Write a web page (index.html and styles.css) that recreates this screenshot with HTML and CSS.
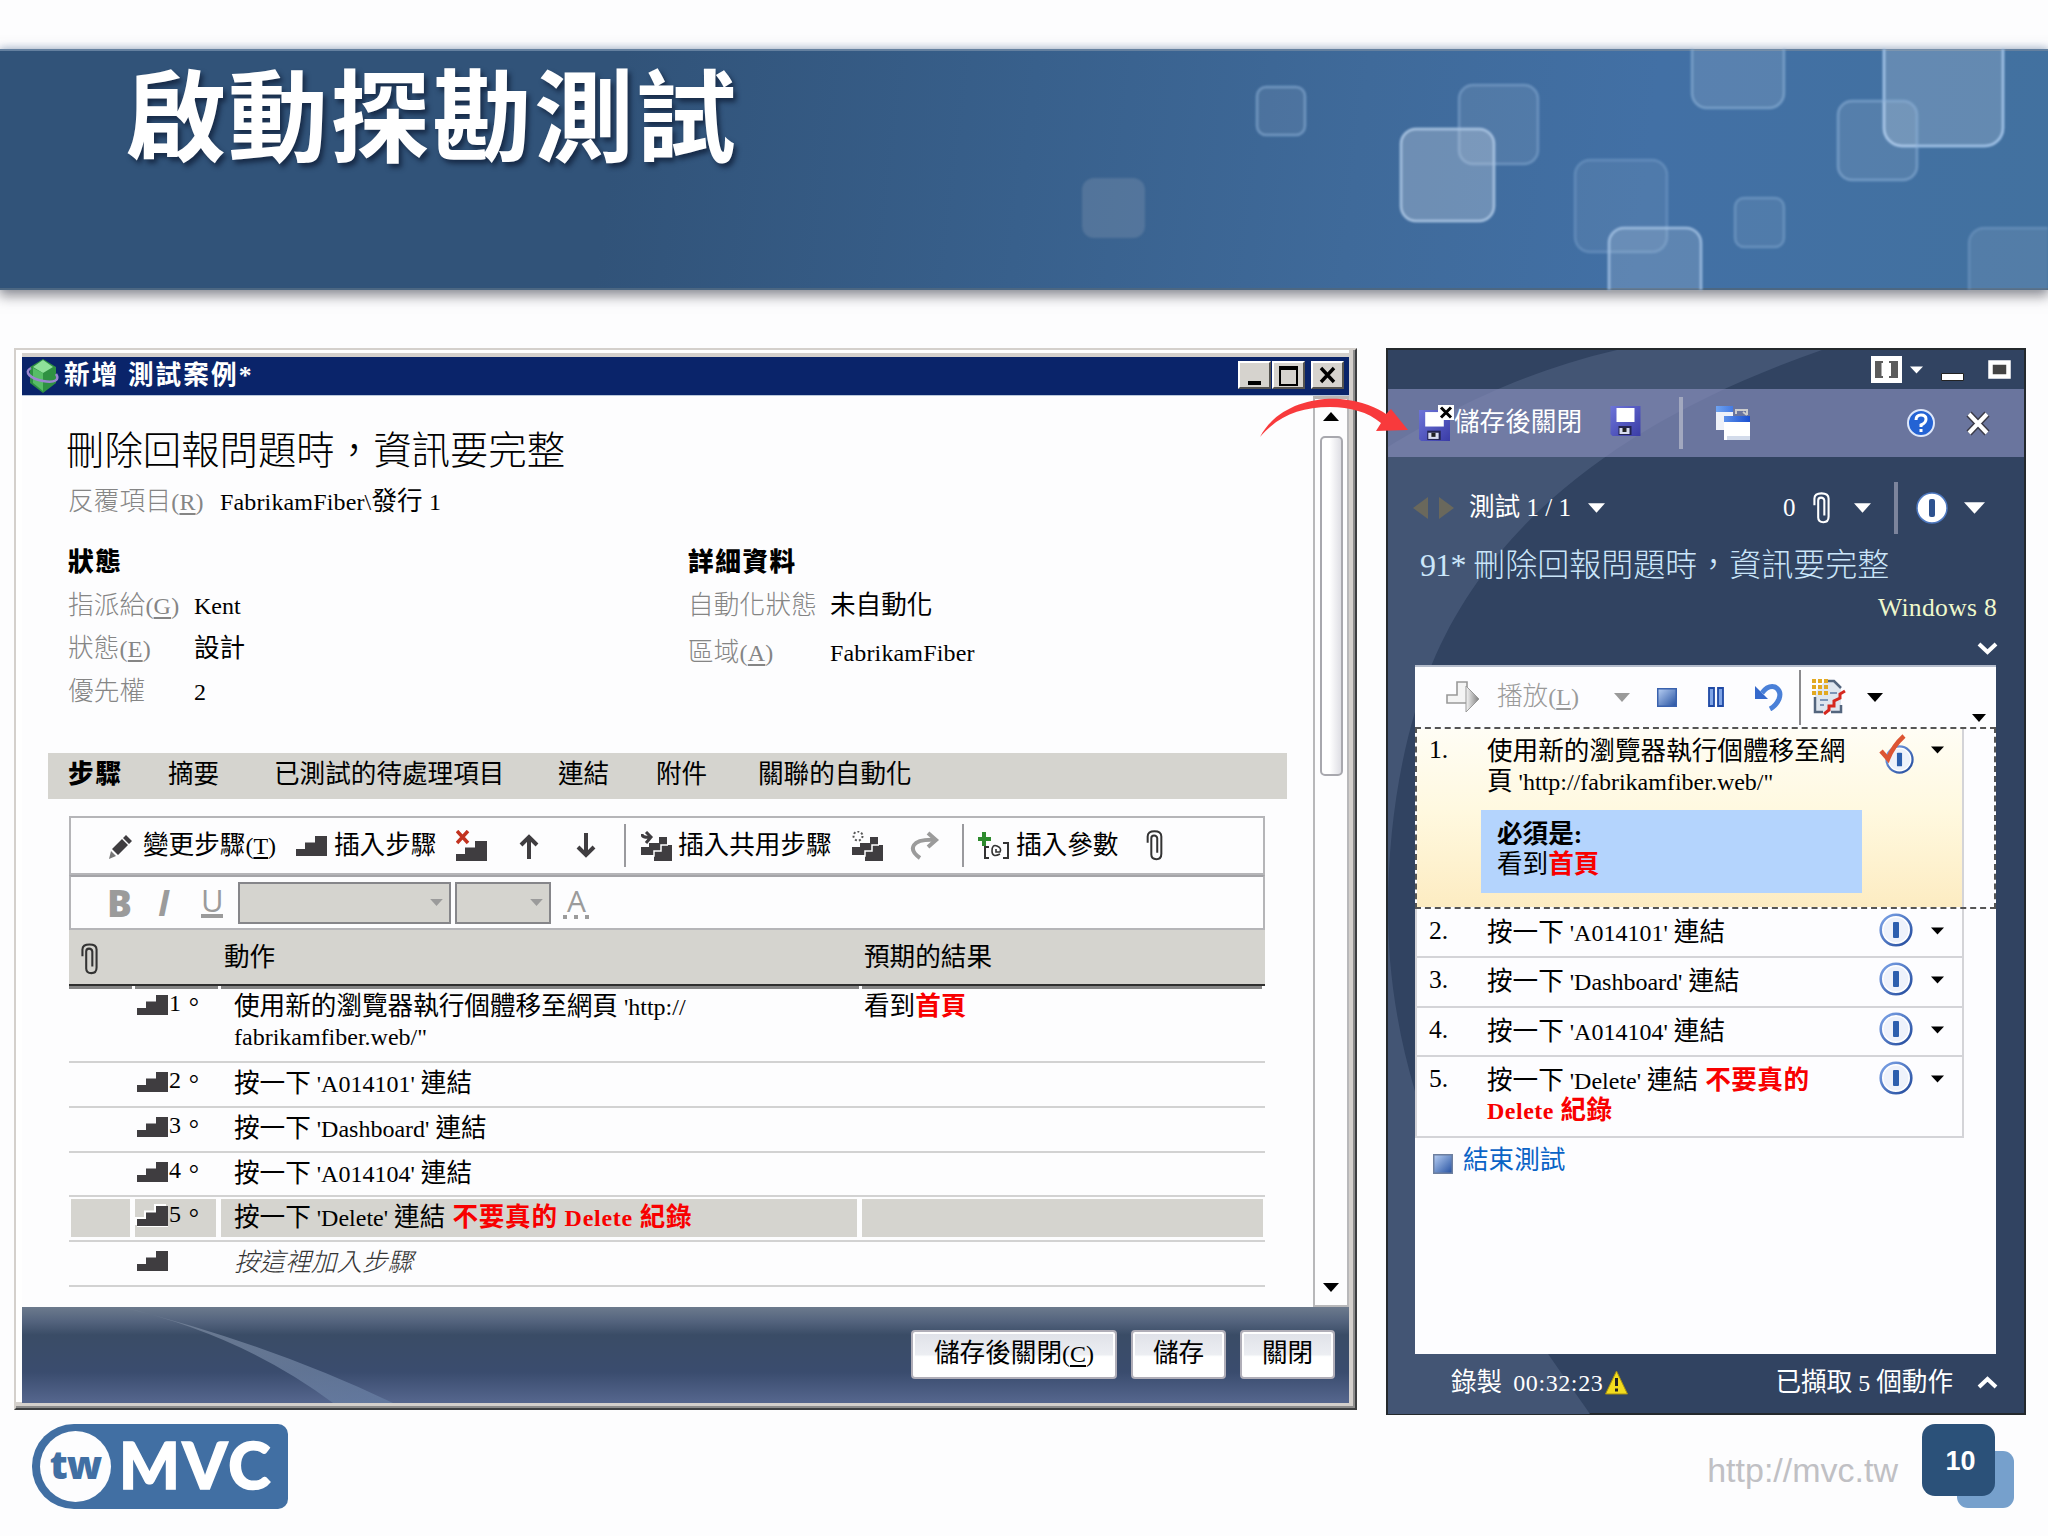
FILE: index.html
```html
<!DOCTYPE html>
<html lang="zh-Hant">
<head>
<meta charset="utf-8">
<title>啟動探勘測試</title>
<link rel="stylesheet" href="styles.css">
</head>
<body>
<svg class="defs" width="0" height="0">
  <defs>
    <linearGradient id="blueSq" x1="0" y1="0" x2="1" y2="1"><stop offset="0" stop-color="#b9d0f4"/><stop offset="1" stop-color="#2450a0"/></linearGradient>
    <linearGradient id="disk" x1="0" y1="0" x2="1" y2="1"><stop offset="0" stop-color="#6d74d8"/><stop offset="1" stop-color="#3a3ca6"/></linearGradient>
    <linearGradient id="winHead" x1="0" y1="0" x2="1" y2="0"><stop offset="0" stop-color="#6fa4f2"/><stop offset="1" stop-color="#1a4fd0"/></linearGradient>
    <linearGradient id="ring" x1="0" y1="0" x2="1" y2="1"><stop offset="0" stop-color="#7fa6ea"/><stop offset="1" stop-color="#20489a"/></linearGradient>
    <linearGradient id="playG" x1="0" y1="0" x2="1" y2="0"><stop offset="0" stop-color="#f5f5f5"/><stop offset="1" stop-color="#7f7f7f"/></linearGradient>
    <linearGradient id="swoosh" x1="0" y1="0" x2="1" y2="1"><stop offset="0" stop-color="#7d8a9c"/><stop offset="1" stop-color="#667da3"/></linearGradient>
  </defs>
  <symbol id="stairs" viewBox="0 0 31 20"><path fill="#3f3d40" d="M0 20V13H9V6.500H19V0H31V20Z"/></symbol>
  <symbol id="steps3" viewBox="0 0 31 30"><path fill="#3f3d40" d="M18 6H26V14H31V30H13V24H0V16H8V12H18Z"/><path fill="none" stroke="#fff" stroke-width="1.500" d="M0 25H13V20H20V14H27"/></symbol>
  <symbol id="clip" viewBox="0 0 18 34"><path fill="none" stroke="currentColor" stroke-width="2.200" d="M1.500 14V7Q1.500 1.500 9 1.500T16.500 7V26Q16.500 32 11 32T5.500 27V9Q5.500 6 8.500 6T12 9V25"/></symbol>
  <symbol id="down" viewBox="0 0 18 10"><path fill="currentColor" d="M0 0H18L9 10Z"/></symbol>
  <symbol id="floppy" viewBox="0 0 30 30"><path fill="url(#disk)" d="M0 0H30V30H2L0 28Z"/><path fill="#fff" d="M6 2H24V16H6Z"/><path fill="#23244f" d="M8 20H21V29H8Z"/><path fill="#d8dcf0" d="M9 22H19V28H9Z"/><path fill="#222" d="M12 22H16V26H12Z"/></symbol>
  <symbol id="info" viewBox="0 0 34 34"><circle cx="17" cy="17" r="15.300" fill="#fff" stroke="url(#ring)" stroke-width="2.600"/><circle cx="17" cy="17" r="12.500" fill="#eef2fb"/><rect x="14" y="9" width="6" height="16" rx="1" fill="#2d5fae"/></symbol>
</svg>

<div class="slide">
  <header class="banner">
    <svg class="squares" width="1024" height="241" viewBox="1024 49 1024 241">
      <g stroke="#8fb3d9" stroke-width="2.500">
        <rect x="1082" y="178" width="63" height="60" rx="12" fill="#8a9db5" fill-opacity=".32" stroke="none"/>
        <rect x="1257" y="87" width="48" height="48" rx="9" fill="#fff" fill-opacity=".08" stroke-opacity=".6"/>
        <rect x="1459" y="85" width="79" height="79" rx="14" fill="#fff" fill-opacity=".09" stroke-opacity=".5"/>
        <rect x="1401" y="129" width="93" height="92" rx="15" fill="#dbe2ea" fill-opacity=".3" stroke="#a9c4e2"/>
        <rect x="1575" y="160" width="92" height="92" rx="15" fill="#fff" fill-opacity=".07" stroke-opacity=".38"/>
        <rect x="1609" y="228" width="92" height="92" rx="15" fill="#fff" fill-opacity=".15" stroke="#a5c3e4" stroke-opacity=".9"/>
        <rect x="1692" y="16" width="92" height="92" rx="15" fill="#fff" fill-opacity=".12" stroke-opacity=".65"/>
        <rect x="1884" y="28" width="119" height="118" rx="18" fill="#fff" fill-opacity=".18" stroke="#a5c6ea"/>
        <rect x="1838" y="101" width="79" height="79" rx="14" fill="#fff" fill-opacity=".1" stroke-opacity=".6"/>
        <rect x="1735" y="198" width="49" height="49" rx="9" fill="#fff" fill-opacity=".08" stroke-opacity=".45"/>
        <rect x="1969" y="228" width="110" height="110" rx="15" fill="#fff" fill-opacity=".09" stroke-opacity=".35"/>
      </g>
    </svg>
    <h1>啟動探勘測試</h1>
  </header>

  <main class="stage">
    <section class="win">
      <div class="win-title">
        <svg width="34" height="34" viewBox="0 0 34 34"><path fill="#2f9142" d="M17 0L30 8V24L17 34L4 24V8Z"/><path fill="#8fe09a" d="M17 1L27 8L17 14L7 8Z"/><path fill="#57bd66" d="M7 9L17 14V32L7 24Z"/><path fill="none" stroke="#9a86cf" stroke-width="2.500" d="M5 9C-3 13 5 20 17 22S34 21 30 15"/></svg>
        <span class="win-name">新增 測試案例*</span>
        <div class="win-btns">
          <span class="wb"><svg width="30" height="26"><rect x="8" y="18" width="13" height="4"/></svg></span>
          <span class="wb"><svg width="30" height="26"><path fill="none" stroke="#000" stroke-width="2" d="M6 4V22H23V4"/><rect x="5" y="3" width="19" height="4"/></svg></span>
          <span class="wb gap"><svg width="30" height="26"><path fill="none" stroke="#000" stroke-width="3.400" d="M8 5L21 19M21 5L8 19"/></svg></span>
        </div>
      </div>
      <div class="win-body">
        <div class="content">
          <h2>刪除回報問題時，資訊要完整</h2>
          <p class="iter"><span class="lbl">反覆項目<i>(<u>R</u>)</i></span><span><i class="name">FabrikamFiber\</i>發行 <i>1</i></span></p>
          <div class="details">
            <dl class="left">
              <dt class="head">狀態</dt><dd></dd>
              <dt>指派給<i>(<u>G</u>)</i></dt><dd><i>Kent</i></dd>
              <dt>狀態<i>(<u>E</u>)</i></dt><dd>設計</dd>
              <dt>優先權</dt><dd><i>2</i></dd>
            </dl>
            <dl class="right">
              <dt class="head">詳細資料</dt><dd></dd>
              <dt>自動化狀態</dt><dd>未自動化</dd>
              <dt class="low">區域<i>(<u>A</u>)</i></dt><dd class="low"><i class="name">FabrikamFiber</i></dd>
            </dl>
          </div>
          <nav class="tabs"><b>步驟</b><span>摘要</span><span>已測試的待處理項目</span><span>連結</span><span>附件</span><span>關聯的自動化</span></nav>

          <div class="editor">
            <div class="tools">
              <svg width="24" height="30" viewBox="0 0 24 30"><path fill="#3f3d40" d="M17 4L23 10L20 13L14 7ZM13 8L19 14L9 24L3 18Z"/><path fill="#777" d="M2 20L7 25L0 28Z"/></svg>
              <span>變更步驟<i>(<u>T</u>)</i></span>
              <svg width="31" height="20"><use href="#stairs"/></svg>
              <span>插入步驟</span>
              <svg width="31" height="31" viewBox="0 0 31 31"><path stroke="#c2321f" stroke-width="3.500" d="M1 1L12 13M12 1L1 13"/><svg y="11" width="31" height="20"><use href="#stairs"/></svg></svg>
              <svg width="24" height="26" viewBox="0 0 24 26"><path fill="none" stroke="#3f3d40" stroke-width="4" d="M12 26V3M4 12L12 4L20 12"/></svg>
              <svg width="24" height="26" viewBox="0 0 24 26"><path fill="none" stroke="#3f3d40" stroke-width="4" d="M12 0V22M4 14L12 22L20 14"/></svg>
              <s></s>
              <svg width="31" height="30" viewBox="0 0 31 30"><use href="#steps3"/><path fill="none" stroke="#3f3d40" stroke-width="3" d="M1 3Q1 7 9 6M5 1L10 6L5 12"/></svg>
              <span>插入共用步驟</span>
              <svg width="31" height="30" viewBox="0 0 31 30"><use href="#steps3"/><circle cx="6" cy="5" r="4.500" fill="none" stroke="#555" stroke-width="2" stroke-dasharray="2 2"/></svg>
              <svg width="30" height="30" viewBox="0 0 30 30"><path fill="none" stroke="#9b9b9b" stroke-width="4" d="M10 27Q0 20 4 14Q8 8 26 9"/><path fill="none" stroke="#9b9b9b" stroke-width="4" d="M18 2L26 9L18 16"/></svg>
              <s></s>
              <svg width="31" height="28" viewBox="0 0 31 28"><path fill="#2e8b2e" d="M4 0H8V5H13V9H8V14H4V9H0V5H4Z"/><path fill="none" stroke="#333" stroke-width="2" d="M11 15H7V26H11M25 11H30V26H25"/><path fill="none" stroke="#333" stroke-width="1.600" d="M22 22Q14 26 14 19T19 14T22 20H18V17"/></svg>
              <span>插入參數</span>
              <svg class="clip" width="17" height="31"><use href="#clip"/></svg>
            </div>
            <div class="format">
              <b class="fb">B</b><em class="fi">I</em><span class="fu">U</span>
              <span class="combo w1"><svg width="13" height="7"><use href="#down"/></svg></span>
              <span class="combo w2"><svg width="13" height="7"><use href="#down"/></svg></span>
              <span class="fa">A<svg width="27" height="4"><path fill="#9b9b9b" d="M0 0H4V4H0ZM11 0H15V4H11ZM22 0H26V4H22Z"/></svg></span>
            </div>
            <div class="grid thead"><span><svg class="clip" width="17" height="32"><use href="#clip"/></svg></span><span></span><span>動作</span><span>預期的結果</span></div>
            <div class="grid tall"><span></span><span class="no"><svg width="31" height="20"><use href="#stairs"/></svg><i>1</i>。</span><span>使用新的瀏覽器執行個體移至網頁<i> 'http://<br>fabrikamfiber.web/"</i></span><span>看到<b>首頁</b></span></div>
            <div class="grid"><span></span><span class="no"><svg width="31" height="20"><use href="#stairs"/></svg><i>2</i>。</span><span>按一下<i> 'A014101' </i>連結</span><span></span></div>
            <div class="grid"><span></span><span class="no"><svg width="31" height="20"><use href="#stairs"/></svg><i>3</i>。</span><span>按一下<i> 'Dashboard' </i>連結</span><span></span></div>
            <div class="grid"><span></span><span class="no"><svg width="31" height="20"><use href="#stairs"/></svg><i>4</i>。</span><span>按一下<i> 'A014104' </i>連結</span><span></span></div>
            <div class="grid sel"><span></span><span class="no"><svg width="31" height="20"><use href="#stairs"/></svg><i>5</i>。</span><span>按一下<i> 'Delete' </i>連結<b> 不要真的<i> Delete </i>紀錄</b></span><span></span></div>
            <div class="grid"><span></span><span class="no"><svg width="31" height="20"><use href="#stairs"/></svg></span><span><em class="hint">按這裡加入步驟</em></span><span></span></div>
          </div>
        </div>
        <div class="scroll"><svg width="16" height="10"><path d="M0 9L8 0L16 9Z"/></svg><span class="thumb"></span><svg class="dn" width="16" height="10"><path d="M0 0H16L8 9Z"/></svg></div>
      </div>
      <div class="win-foot">
        <svg class="sweep" width="400" height="96" viewBox="0 0 400 96"><path fill="url(#swoosh)" opacity=".75" d="M100 0Q245 36 371 96H311Q220 28 100 0Z"/></svg>
        <button class="b1">儲存後關閉<i>(<u>C</u>)</i></button><button>儲存</button><button>關閉</button>
      </div>
    </section>

    <section class="runner">
      <svg class="arc" width="636" height="1064" viewBox="1388 350 636 1064"><path fill="#435574" d="M1617 350C1520 372 1440 415 1388 447V1414H1590C1525 1320 1408 1170 1390 960C1382 850 1400 740 1432 664C1490 525 1620 420 1822 350Z"/></svg>
      <div class="r-top">
        <svg width="31" height="27" viewBox="0 0 31 27"><path fill="#fff" d="M0 0H31V27H0Z"/><path fill="#5c5c5c" d="M4 5H12V22H4ZM18 5H27V22H18Z"/><path fill="#fff" d="M10.500 7H12V20H10.500ZM18 7H20V20H18Z"/></svg>
        <svg class="w" width="13" height="8"><use href="#down"/></svg>
        <svg class="mn" width="23" height="8"><path fill="#fff" stroke="#222" d="M.5 .5H22.500V7.500H.5Z"/></svg>
        <svg class="mx" width="23" height="19"><path fill="#444" stroke="#fff" stroke-width="4.500" d="M2.500 2.500H20.500V16.500H2.500Z"/></svg>
      </div>
      <div class="r-bar">
        <svg width="36" height="36" viewBox="0 0 36 36"><svg y="5" width="31" height="31"><use href="#floppy"/></svg><path fill="#fff" d="M19 0H35V15H19Z"/><path stroke="#000" stroke-width="3" d="M22 2.500L32 12.500M32 2.500L22 12.500"/></svg>
        <span>儲存後關閉</span>
        <svg class="sv" width="31" height="30"><use href="#floppy"/></svg>
        <s></s>
        <svg width="34" height="34" viewBox="0 0 34 34"><path fill="#eef1f8" d="M0 0H17V24H0Z"/><path fill="url(#winHead)" d="M0 0H17V6H0ZM8 10H34V17H8Z"/><path fill="#fff" d="M8 16H34V34H8Z"/><path fill="#d3dbea" d="M11 30H34V34H11Z"/><path fill="none" stroke="#ccc" stroke-width="2" d="M20 8V4H31V9M27 6L31 9"/></svg>
        <svg width="30" height="30" viewBox="0 0 30 30"><circle cx="15" cy="15" r="13" fill="#2463d4" stroke="#dfe8fa" stroke-width="2"/><path fill="none" stroke="#fff" stroke-width="3" d="M10 12Q10 7 15 7T20 11T15 17V19M15 21V24"/></svg>
        <svg width="27" height="25" viewBox="0 0 27 25"><path stroke="#3b3b48" stroke-width="7" d="M4 3L22 22M22 3L4 22"/><path stroke="#fff" stroke-width="4" d="M4 3L22 22M22 3L4 22"/></svg>
      </div>
      <div class="r-nav">
        <svg width="16" height="22"><path fill="#6a685c" d="M15 0V22L0 11Z"/></svg>
        <svg width="16" height="22"><path fill="#6a685c" d="M0 0V22L15 11Z"/></svg>
        <span>測試<i> 1 / 1</i></span>
        <svg width="17" height="10"><use href="#down"/></svg>
        <i>0</i>
        <svg width="17" height="34"><use href="#clip"/></svg>
        <svg width="17" height="10"><use href="#down"/></svg>
        <s></s>
        <svg width="34" height="34" viewBox="0 0 34 34"><circle cx="16" cy="17" r="15" fill="#fff" stroke="#4d78c0" stroke-width="1.500"/><rect x="13" y="8" width="6" height="18" rx="2" fill="#2d528f"/></svg>
        <svg width="21" height="12"><use href="#down"/></svg>
      </div>
      <div class="r-title"><i>91* </i>刪除回報問題時，資訊要完整</div>
      <div class="r-os"><i>Windows 8</i></div>
      <div class="r-chev"><svg width="21" height="13" viewBox="0 0 21 13"><path fill="none" stroke="#fff" stroke-width="4" d="M2 2L10.500 10L19 2"/></svg></div>
      <div class="sheet">
        <div class="s-tools">
          <svg width="34" height="32" viewBox="0 0 34 32"><path fill="#f4f4f4" stroke="#999" stroke-width="1.600" d="M1 14H11V1H21V14V22H1Z"/><path fill="url(#playG)" stroke="#999" d="M20 5L33 18L20 31Z"/></svg>
          <span class="dim">播放<i>(<u>L</u>)</i></span>
          <svg class="g" width="16" height="9"><use href="#down"/></svg>
          <svg width="20" height="19"><rect x=".75" y=".75" width="18.500" height="17.500" fill="url(#blueSq)" stroke="#3a62ae" stroke-width="1.500"/></svg>
          <svg width="20" height="20"><path fill="#7fa4e6" stroke="#1f49a5" stroke-width="1.800" d="M3 1H8V19H3ZM12 1H17V19H12Z"/></svg>
          <svg width="28" height="28" viewBox="0 0 28 28"><path fill="#3569cc" d="M0 3V16H13Z"/><path fill="none" stroke="#4a80d8" stroke-width="5" d="M7 10Q13 2 20 4Q27 8 24 16Q21 23 15 26"/></svg>
          <s></s>
          <svg width="36" height="36" viewBox="0 0 36 36"><path fill="#dfe6ef" d="M4 14V33H30V10L23 2H14Z"/><path fill="none" stroke="#53657e" stroke-width="2.500" d="M4 18V33H12M20 33H30V26M15 2H23L30 9"/><path stroke="#7d96b8" stroke-width="2" d="M9 21H17M9 26H13M19 14H26"/><path stroke="#e2a921" stroke-width="4" stroke-dasharray="4 2" d="M1 2H17M1 8H17M1 14H17"/><path fill="none" stroke="#d6281f" stroke-width="3" d="M34 12L29 15V19L23 22V27H18V31L13 35"/></svg>
          <svg width="16" height="9"><use href="#down"/></svg>
          <svg class="corner" width="14" height="8"><use href="#down"/></svg>
        </div>
        <div class="focus">
          <div class="step first">
            <i>1.</i>
            <div>使用新的瀏覽器執行個體移至網<br>頁<i> 'http://fabrikamfiber.web/"</i>
              <div class="expect"><strong>必須是:</strong><br>看到<b>首頁</b></div>
            </div>
            <svg class="ic" width="36" height="44" viewBox="0 0 36 44"><svg x="6" y="10" width="29" height="33"><use href="#info"/></svg><path fill="none" stroke="#dd5533" stroke-width="4.500" d="M2 18L9 26Q14 13 25 3"/></svg>
            <svg class="dd" width="13" height="8"><use href="#down"/></svg>
          </div>
        </div>
        <div class="step s2"><i>2.</i><div>按一下<i> 'A014101' </i>連結</div><svg class="ic" width="34" height="34"><use href="#info"/></svg><svg class="dd" width="13" height="8"><use href="#down"/></svg></div>
        <div class="step"><i>3.</i><div>按一下<i> 'Dashboard' </i>連結</div><svg class="ic" width="34" height="34"><use href="#info"/></svg><svg class="dd" width="13" height="8"><use href="#down"/></svg></div>
        <div class="step"><i>4.</i><div>按一下<i> 'A014104' </i>連結</div><svg class="ic" width="34" height="34"><use href="#info"/></svg><svg class="dd" width="13" height="8"><use href="#down"/></svg></div>
        <div class="step last"><i>5.</i><div>按一下<i> 'Delete' </i>連結<b> 不要真的<br><i>Delete </i>紀錄</b></div><svg class="ic" width="34" height="34"><use href="#info"/></svg><svg class="dd" width="13" height="8"><use href="#down"/></svg></div>
        <div class="end"><svg width="20" height="20"><rect x=".75" y=".75" width="18.500" height="18.500" fill="url(#blueSq)" stroke="#6d7f9f" stroke-width="1.500"/></svg><span>結束測試</span></div>
      </div>
      <div class="r-status">
        <span>錄製<i class="time">00:32:23</i></span>
        <svg width="23" height="25" viewBox="0 0 23 25"><path fill="#f2dc1e" stroke="#a88f10" d="M11.500 1L22.500 24H.5Z"/><path stroke="#222" stroke-width="3" d="M11.500 8V16M11.500 18.500V21.500"/></svg>
        <span class="cap">已擷取<i> 5 </i>個動作</span>
        <svg class="up" width="21" height="13" viewBox="0 0 21 13"><path fill="none" stroke="#fff" stroke-width="4" d="M2 11L10.500 3L19 11"/></svg>
      </div>
    </section>
  </main>

  <footer class="foot">
    <div class="logo"><span class="tw">tw</span><span class="mvc">MVC</span></div>
    <span class="url">http://mvc.tw</span>
    <div class="page"><span>10</span></div>
  </footer>

  <svg class="pointer" width="160" height="50" viewBox="1255 390 160 50"><path fill="#f83a3c" d="M1260 437C1275 408 1310 397 1340 399C1362 401 1378 408 1386 414L1391 409L1408 430L1376 431L1381 423C1368 412 1350 407 1330 407C1300 407 1278 416 1260 437Z"/></svg>
</div>
</body>
</html>
```
FILE: styles.css
```css
* { box-sizing: border-box; }
body {
  margin: 0;
  font-family: "Liberation Serif", "Noto Sans CJK TC", serif;
  font-size: 25.6px;
  line-height: 30px;
  color: #000;
  background: #fdfdfe;
}
h1, h2, p, dl, dd { margin: 0; }
svg { display: block; flex: none; }
s { display: block; text-decoration: none; }
/* Latin runs set slightly smaller than the Chinese text */
i { font-style: normal; font-size: 24px; white-space: pre; }
u { text-underline-offset: 3px; text-decoration-thickness: 1.5px; }
.name { letter-spacing: .15px; }
.defs { position: absolute; }

.slide {
  position: relative;
  width: 2048px;
  height: 1536px;
  overflow: hidden;
  padding-top: 49px;
  background: #fdfdfe;
}

.banner {
  position: relative;
  height: 241px;
  background: linear-gradient(97deg, #315379 0%, #315379 30%, #38608c 50%, #3f6a9a 66%, #4270a5 80%, #42719f 100%);
  border-top: 2px solid #64809f;
  border-bottom: 2px solid #4c6782;
  box-shadow: 0 5px 12px 1px rgba(70, 70, 80, .6), 0 -2px 7px rgba(160, 190, 225, .5);
}
.squares { position: absolute; right: 0; top: -2px; filter: blur(.8px); }
.banner h1 {
  padding: 0 0 0 126px;
  font: 600 100px/120px "Noto Sans CJK TC", sans-serif;
  letter-spacing: 2px;
  color: #fff;
  text-shadow: 3px 4px 5px rgba(15, 30, 55, .75);
}

.stage { display: flex; gap: 28px; padding: 58px 0 0 14px; height: 1124px; }

/* Test case window */
.win {
  display: flex;
  flex-direction: column;
  width: 1343px;
  height: 1062px;
  margin-right: 1px;
  padding: 3px;
  background: #fff;
  border: 2px solid;
  border-color: #d4d0cc #3c3e40 #3c3e40 #d4d0cc;
  box-shadow: inset -2px -2px 0 #8c8c8c, inset -6px -6px 0 #d4d0cc;
}
.win > * { margin: 0 3px; }
.win-title {
  display: flex;
  align-items: center;
  height: 43px;
  padding: 0 5px 1px 4px;
  border-top: 4px solid #d4d0cc;
  border-bottom: 1px solid #b9c7da;
  background: #0a246a;
  color: #fff;
}
.win-name { margin-left: 4px; font-weight: 700; letter-spacing: 2.1px; white-space: pre; }
.win-btns { display: flex; gap: 1px; margin-left: auto; margin-top: -2px; }
.wb {
  width: 33px; height: 28px;
  background: #d6d3ce;
  border: 2px solid;
  border-color: #fff #55534f #55534f #fff;
}
.wb.gap { margin-left: 5px; }
.win-body { display: flex; height: 911px; background: #fdfdfe; }
.content { width: 1291px; padding: 32px 0 0 26px; }
.content h2 { margin-left: 18px; font-size: 38.4px; font-weight: 300; line-height: 46px; }
.iter { display: flex; margin: 12px 0 0 20px; height: 53px; line-height: 32px; }
.lbl { width: 152px; color: #858585; }
.lbl, .details dt { letter-spacing: .2px; font-weight: 300; }
.details { display: flex; height: 214px; padding-left: 20px; }
.details dl { display: grid; grid-auto-rows: 43px; line-height: 43px; padding-top: 2px; }
.left { grid-template-columns: 126px 494px; }
.right { grid-template-columns: 142px 300px; }
.details dt { color: #858585; }
.details dt.head { color: #000; font-weight: 900; letter-spacing: 1.6px; }
.low { padding-top: 4px; }
.tabs {
  display: grid;
  grid-template-columns: 100px 106px 284px 98px 102px 200px;
  width: 1239px;
  height: 46px;
  padding-left: 20px;
  line-height: 44px;
  background: #d5d4cf;
}
.tabs b { font-weight: 900; letter-spacing: 2px; }

.editor { width: 1196px; margin: 17px 0 0 21px; }
.tools {
  display: grid;
  grid-template-columns: 34px 153px 38px 122px 61px 57px 50px 17px 37px 174px 58px 52px 16px 38px 130px 30px;
  align-items: center;
  height: 59px;
  padding-left: 38px;
  border: 2px solid #b5b5b8;
  white-space: nowrap;
}
.tools s { width: 2px; height: 43px; background: #9a9a9e; }
.clip { color: #333; }
.format {
  display: grid;
  grid-template-columns: 51px 43px 37px 217px 108px 30px;
  align-items: center;
  height: 55px;
  padding-left: 36px;
  border: 2px solid #b5b5b8;
  border-top-color: #a4a4a8;
  color: #9b9b9b;
  font-family: "Open Sans", sans-serif;
}
.fb { font-size: 37px; font-weight: 800; }
.fi { font-size: 36px; font-weight: 700; }
.fu { font-size: 31px; width: 22px; line-height: 28px; margin-top: -2px; border-bottom: 4px solid #9b9b9b; }
.combo {
  display: flex; align-items: center; justify-content: flex-end;
  height: 42px; padding-right: 6px;
  background: #d5d4cf; border: 2px solid #86868a;
}
.w1 { width: 213px; }
.w2 { width: 96px; }
.fa { font-size: 30px; line-height: 28px; width: 27px; text-align: center; }

.grid {
  display: grid;
  grid-template-columns: 66px 86px 641px 403px;
  height: 44.8px;
  border-bottom: 2px solid #d2d2d2;
  line-height: 41px;
}
.grid > span { white-space: nowrap; }
.grid > span:nth-child(3) { padding-left: 13px; }
.grid > span:nth-child(4) { padding-left: 2px; }
.grid b { color: #f80000; font-weight: 700; }
.sel b { letter-spacing: .75px; }
.grid .no { display: flex; padding-left: 2px; line-height: 35px; }
.no svg { margin-top: 9px; }
.no i { margin-left: 1px; }
.thead { height: 56px; background: #d5d4cf; border-bottom: 2px solid #2f2f2f; line-height: 56px; }
.thead > span { border-bottom: 3px solid #858585; margin-right: 3px; }
.thead > span:nth-child(3) { padding-left: 3px; }
.thead > span:first-child { padding: 13px 0 0 12px; }
.grid.tall { height: 77px; line-height: 30px; }
.tall > span { padding-top: 6px; }
.tall .no { padding-top: 0; }
.sel > span { background: #d5d4cf; margin: 2px 5px 3px 0; line-height: 37px; }
.sel > span:first-child { margin-left: 2px; }
.sel > span:last-child { margin-right: 2px; }
.grid.sel .no { line-height: 31px; }
.sel .no svg { margin-top: 7px; filter: drop-shadow(-1.5px -1.5px 0 #fff) drop-shadow(0 1.5px 0 #fff); }
.hint { color: #333; font-style: italic; font-weight: 300; }

.scroll {
  display: flex; flex-direction: column; align-items: center;
  width: 36px;
  padding: 13px 0 12px;
  border: 2px solid #b8b8ba;
  border-top: 3px solid #b9b5b2;
}
.thumb {
  width: 23px; height: 340px; margin-top: 14px;
  border: 2px solid #a8a8ae; border-radius: 5px;
  background: linear-gradient(90deg, #fff 40%, #dedee4);
}
.dn { margin-top: auto; }
.win-foot {
  position: relative;
  display: flex;
  justify-content: flex-end;
  gap: 14px;
  height: 96px;
  padding: 23px 14px 0 0;
  background: linear-gradient(#6c7a8d 0, #54647e 14px, #3a4c66 28px, #3a4c6e 65px, #54658c 94px);
}
.sweep { position: absolute; left: 0; top: 0; }
.win-foot button {
  width: 95px; height: 49px;
  padding: 0 0 2px;
  font: inherit;
  background: linear-gradient(#dfe1e8, #eceef2 50%, #fff 55%);
  border: 2px solid #b0aeb8;
  border-radius: 4px;
  box-shadow: inset 0 0 0 2px #fff;
  position: relative;
  white-space: nowrap;
}
.win-foot .b1 { width: 206px; }

/* Test runner panel */
.runner {
  position: relative;
  width: 640px;
  height: 1067px;
  border: 2px solid #24292d;
  background: #314361;
  color: #fff;
}
.runner > div { position: relative; }
.arc { position: absolute; left: 0; top: 0; }
.r-top, .r-bar, .r-nav, .s-tools { display: grid; align-items: center; white-space: nowrap; }
.r-top { grid-template-columns: 37px 33px 46px 30px; height: 39px; padding: 0 0 0 483px; }
.mn { margin-top: 15px; }
.mx { margin-left: 1px; }
.w { margin-left: 2px; }
.r-bar {
  grid-template-columns: 35px 156px 69px 37px 190px 59px 30px;
  height: 68px;
  padding-left: 31px;
  background: rgba(137, 142, 190, .66);
}
.r-bar s, .r-nav s { width: 4px; height: 52px; background: #a2a8bf; }
.r-nav s { background: #7c849c; }
.sv { margin-top: -4px; }
.r-nav { grid-template-columns: 26px 30px 119px 195px 30px 41px 40px 22px 48px 30px; height: 102px; padding-left: 25px; }
.r-nav i { font-size: 25px; }
.r-title { height: 34px; padding-left: 32px; margin-top: -12px; font-size: 32px; font-weight: 300; line-height: 36px; color: #cbe6fa; white-space: nowrap; }
.r-title i { font-size: 32px; letter-spacing: -.7px; }
.r-os { height: 50px; padding: 12px 27px 0 0; text-align: right; color: #eff8cc; }
.r-os i { font-size: 25.6px; letter-spacing: .3px; }
.r-chev { display: flex; justify-content: flex-end; height: 34px; padding: 11px 26px 0 0; }
.sheet { width: 581px; height: 689px; margin-left: 27px; background: #fdfdff; color: #000; }
.s-tools {
  grid-template-columns: 51px 117px 43px 49px 49px 44px 12px 56px 105px 20px;
  height: 62px;
  padding-left: 31px;
  border-top: 2px solid #b4bccb;
}
.s-tools s { width: 2px; height: 55px; background: #8a8a8e; }
.dim { color: #9a9a9a; font-weight: 300; }
.g { color: #9a9a9a; }
.corner { margin-top: 41px; }
.focus { height: 182px; border: 2px dashed #555; }
.step {
  display: grid;
  grid-template-columns: 58px 392px 52px 20px;
  width: 549px;
  height: 49.3px;
  padding: 9px 0 0 12px;
  border: 2px solid #d4d4d8;
  border-top: 0;
  white-space: nowrap;
}
.step > i { font-size: 25.6px; margin-top: -2px; }
.step b { color: #f80000; }
.last b { letter-spacing: .5px; }
.ic { margin-top: -5px; }
.dd { margin-top: 9px; }
.step.first {
  height: 178px; width: 547px;
  padding: 8px 0 0 12px;
  border-width: 0 2px 0 0;
  background: linear-gradient(#fffdf5, #fff9e0 45%, #fdecc2);
}
.first .ic { margin-top: -4px; }
.expect { width: 381px; height: 83px; margin: 13px 0 0 -6px; padding: 10px 0 0 16px; background: #b4d4fd; }
.step.last { height: 81px; }
.end { display: flex; padding: 8px 0 0 18px; color: #0a63c6; }
.end svg { margin: 8px 10px 0 0; }
.r-status { display: flex; align-items: center; height: 57px; padding-left: 63px; white-space: nowrap; }
.time { margin: 0 2px 0 11px; letter-spacing: .6px; }
.cap { margin-left: auto; }
.up { margin: 0 26px 0 24px; }

/* Slide footer */
.foot { display: flex; padding: 10px 0 0 32px; height: 120px; }
.logo {
  display: flex; align-items: center;
  width: 256px; height: 85px;
  padding-left: 8px;
  border-radius: 42px 10px 10px 42px;
  background: #416fa3;
  font-family: "Open Sans", sans-serif;
  font-weight: 800;
}
.tw {
  width: 71px; height: 71px;
  border-radius: 50%;
  background: #fdfdfe;
  color: #416fa3;
  text-align: center;
  font-size: 39px;
  line-height: 66px;
  letter-spacing: -1px;
}
.mvc { margin: -3px 0 0 8px; font-family: Lato, sans-serif; font-weight: 900; font-size: 64px; line-height: 80px; color: #fff; letter-spacing: 2.5px; -webkit-text-stroke: 1.5px #fff; }
.url { margin: 26px 0 0 auto; font: 34px/40px "Liberation Sans", sans-serif; color: #c0c0c4; }
.page { position: relative; width: 92px; margin: 0 34px 0 24px; height: 84px; }
.page::before { content: ""; position: absolute; right: 0; bottom: 0; width: 57px; height: 57px; border-radius: 11px; background: #76a0cc; }
.page span {
  position: absolute; left: 0; top: 0;
  width: 73px; height: 72px;
  padding-left: 4px;
  border-radius: 13px;
  background: #2b5179;
  color: #fff;
  text-align: center;
  font: 700 27px/74px "Liberation Sans", sans-serif;
}
.pointer { position: absolute; left: 1255px; top: 390px; }
```
